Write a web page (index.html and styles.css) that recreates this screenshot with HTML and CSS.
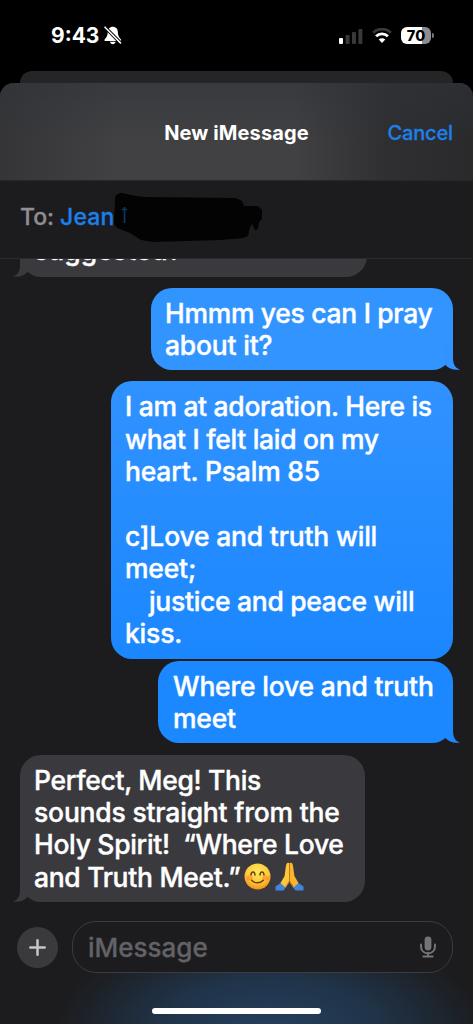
FILE: index.html
```html
<!DOCTYPE html>
<html lang="en">
<head>
<meta charset="utf-8">
<title>New iMessage</title>
<link rel="stylesheet" href="styles.css">
</head>
<body>
<div class="phone">
  <header class="status">
    <span class="time">9:43</span>
    <svg class="bell" width="18" height="19" viewBox="0 0 18 19"><path d="M8.8 .8C5.600 .8 3.900 3 3.700 6.500 3.500 10 2.700 11 .8 13.200c-.7.8-.4 1.800.7 1.800h14.600c1.100 0 1.400-1 .7-1.800-2-2.200-2.700-3.200-2.900-6.700C13.700 3 12 .8 8.800 .8ZM6 15.800h5.600c-.2 3.200-5.400 3.200-5.600 0Z" fill="#fff"/><path d="M.2 .4 17.300 17.800" stroke="#000" stroke-width="3.400"/><path d="M.5 .7 16.900 17.400" stroke="#fff" stroke-width="1.500"/></svg>
    <svg class="signal" width="24" height="16" viewBox="0 0 24 16"><rect x="0" y="10" width="4" height="6" rx="1" fill="#fff"/><g fill="#39393b"><rect x="6.600" y="7" width="4" height="9" rx="1"/><rect x="13" y="4" width="4" height="12" rx="1"/><rect x="19.400" y="1" width="4" height="15" rx="1"/></g></svg>
    <svg class="wifi" width="20" height="15" viewBox="0 0 20 15"><path d="M1.200 4.800C6-.1 14-.1 18.800 4.800" fill="none" stroke="#39393b" stroke-width="2.800"/><path d="M4.100 8.300c3.300-3.300 8.500-3.300 11.800 0" fill="none" stroke="#fff" stroke-width="2.900"/><path d="M6.700 11.500c1.900-1.800 4.700-1.800 6.600 0L10 14.900Z" fill="#fff"/></svg>
    <span class="battery">70</span><i class="battery-cap"></i>
  </header>
  <div class="back-sheet"></div>
  <main class="sheet">
    <div class="titlebar"><h1>New iMessage</h1><span class="cancel">Cancel</span></div>
    <div class="to-row">
      <span class="to">To:</span><span class="name">Jean</span>
      <svg class="scribble" width="152" height="54" viewBox="0 0 152 54"><path d="M3 8C3 3 5 1 10 1l14 3 8 1 92 1 6 3 2 5h14l4 4v9l-3 3-1 7-3 1-3-6-2 3-2 9-5 2-22 2-34 1-34 1-12-2L18 41 5 36 2 32Z" fill="#030304"/><path d="M12.500 15v16M9.800 17.500h5.400" stroke="#0b3765" stroke-width="1.700" fill="none"/></svg>
    </div>
    <section class="thread">
      <div class="bubble in clipped"><p>suggested?</p><svg class="tail" width="16" height="26" viewBox="0 0 16 26"><path d="M7 0v13.500C7 20 5 24 0 25.500c6 1.100 11.500-.9 14.500-4.500L16 0Z"/></svg></div>
      <div class="bubble out first"><p class="tight">Hmmm yes can I pray</p><p class="snug">about it?</p><svg class="tail" width="16" height="26" viewBox="0 0 16 26"><path d="M9 0v13.500c0 6.500 2 10.500 7 12-6 1.100-11.500-.9-14.500-4.500L0 0Z"/></svg></div>
      <div class="bubble out second"><p class="tight">I am at adoration. Here is</p><p class="tight">what I felt laid on my</p><p class="snug">heart. Psalm 85</p><p></p><p class="snug">c]Love and truth will</p><p class="snug">meet;</p><p class="indent tight">justice and peace will</p><p class="snug">kiss.</p></div>
      <div class="bubble out third"><p class="snug">Where love and truth</p><p class="snug">meet</p><svg class="tail" width="16" height="26" viewBox="0 0 16 26"><path d="M9 0v13.500c0 6.500 2 10.500 7 12-6 1.100-11.500-.9-14.500-4.500L0 0Z"/></svg></div>
      <div class="bubble in last"><p class="tight">Perfect, Meg! This</p><p class="snug">sounds straight from the</p><p class="tight">Holy Spirit!&nbsp; “Where Love</p>
        <p class="emoji-line"><span class="tight">and Truth Meet.”</span><svg class="smile" width="27" height="27" viewBox="0 0 27 27"><defs><radialGradient id="face" cx=".5" cy=".3" r=".72"><stop stop-color="#ffe85c"/><stop offset=".6" stop-color="#ffc936"/><stop offset="1" stop-color="#f58a18"/></radialGradient></defs><circle cx="13.500" cy="13.500" r="13" fill="url(#face)"/><g fill="#ff7930" opacity=".5"><ellipse cx="5.300" cy="15" rx="3.500" ry="2.500"/><ellipse cx="21.700" cy="15" rx="3.500" ry="2.500"/></g><path d="M7 12c.3-4.100 3.700-4.100 4 0M16 12c.3-4.100 3.700-4.100 4 0M7.700 17.200c3 3.500 8.600 3.500 11.600 0" fill="none" stroke="#69400f" stroke-width="1.500" stroke-linecap="round"/></svg><svg class="pray" width="29" height="29" viewBox="0 0 29 29"><path d="M.5 24.500 7 20l5 4-3.500 4.500H.5ZM28.500 24.500 22 20l-5 4 3.500 4.500h8Z" fill="#4385d8"/><path d="M14.200 1C12 0 11 2 10.800 5L9.600 14 5.500 21l5 4.500 3.700-5Z" fill="#ffc73d"/><path d="M14.800 1c2.200-1 3.200 1 3.400 4l1.200 9 4.100 7-5 4.500-3.700-5Z" fill="#fbb42c"/><path d="M14.500 1v18l-3.800 6M14.500 19l3.800 6" fill="none" stroke="#bd7413" stroke-width="1"/></svg></p>
        <svg class="tail" width="16" height="26" viewBox="0 0 16 26"><path d="M7 0v13.500C7 20 5 24 0 25.500c6 1.100 11.500-.9 14.500-4.500L16 0Z"/></svg></div>
    </section>
    <footer class="composer">
      <div class="plus"><svg width="17" height="17" viewBox="0 0 17 17"><path d="M8.500 1.300v14.400M1.300 8.500h14.400" stroke="#c6c6ca" stroke-width="2.500" stroke-linecap="round"/></svg></div>
      <div class="field"><span>iMessage</span><svg width="16" height="22" viewBox="0 0 16 22"><rect x="4.600" y=".5" width="6.800" height="14" rx="3.400" fill="#737378"/><path d="M1 8.500v2c0 9 14 9 14 0v-2M8 17v3.500M3.300 20.600h9.400" fill="none" stroke="#737378" stroke-width="2" stroke-linecap="round"/></svg></div>
    </footer>
    <div class="home"></div>
  </main>
</div>
</body>
</html>
```
FILE: styles.css
```css
* { box-sizing: border-box; margin: 0; padding: 0; }
body { background: #000; font-family: Inter, "Liberation Sans", sans-serif; }
.phone { width: 473px; height: 1024px; overflow: hidden; background: #000; display: flex; flex-direction: column; }
svg { display: block; flex: none; }
.status { height: 71px; flex: none; display: flex; align-items: center; padding-left: 51px; color: #fff; }
.time { width: 53px; font-size: 21px; font-weight: 700; white-space: nowrap; }
.signal { margin-left: 217px; }
.wifi { margin-left: 9px; }
.battery { width: 30px; height: 17px; margin-left: 9px; border-radius: 6px; background: linear-gradient(90deg, #fff 70%, #8d8d8f 70%); color: #000; font-size: 14.500px; font-weight: 800; line-height: 17px; text-align: center; }
.battery-cap { width: 2px; height: 5px; margin-left: 1px; border-radius: 0 2px 2px 0; background: #777; }
.back-sheet { height: 12px; flex: none; margin: 0 20px; border-radius: 12px 12px 0 0; background: #252527; }
.sheet { height: 941px; flex: none; display: flex; flex-direction: column; border-radius: 14px 14px 0 0; overflow: hidden; background: radial-gradient(ellipse 215px 110px at 57% 101%, #24405f 0%, #203449 50%, transparent 100%), #1c1c1e; }
.titlebar { height: 97px; flex: none; display: grid; grid-template-columns: 1fr auto 1fr; align-items: center; padding: 2px 20px 0; background: linear-gradient(180deg, rgba(45,51,57,.5), transparent 60%), linear-gradient(90deg, #353537 0, #414143 25%, #414143 62%, #2f2f31 82%, #2a2a2c 100%); }
h1 { grid-column: 2; color: #fff; font-size: 20px; font-weight: 700; line-height: 28px; letter-spacing: .12px; }
.cancel { justify-self: end; color: #1e7fe6; font-size: 20px; font-weight: 500; letter-spacing: -.15px; -webkit-text-stroke: .3px #1e7fe6; }
.to-row { height: 79px; flex: none; display: flex; align-items: center; padding: 0 0 6px 20px; border-top: 1px solid #29292b; border-bottom: 1px solid #2b2b2d; background: #1c1c1e; font-size: 23px; font-weight: 500; -webkit-text-stroke: .3px; }
.to { width: 40px; color: #8e8e94; }
.name { width: 52px; color: #1d7fe8; letter-spacing: .15px; }
.scribble { margin-top: 4px; }
.thread { height: 644px; flex: none; display: flex; flex-direction: column; overflow: hidden; }
.bubble { position: relative; flex: none; padding: 8.500px 14px; border-radius: 21px; color: #fff; font-size: 26.500px; font-weight: 500; line-height: 32.400px; -webkit-text-stroke: .4px #fff; }
.bubble p { height: 32.400px; white-space: nowrap; }
.snug { letter-spacing: -.2px; }
.tight { letter-spacing: -.31px; }
.in { align-self: flex-start; margin-left: 20px; background: #3a3a3e; fill: #3a3a3e; }
.out { align-self: flex-end; margin-right: 20px; fill: #3093ff; }
.tail { position: absolute; bottom: 0; }
.in .tail { left: -7px; }
.out .tail { right: -7px; }
.clipped { width: 347px; height: 50px; margin-top: -32px; padding-top: 6.500px; }
.first { width: 302px; height: 82px; margin-top: 11px; background: #3294ff; }
.second { width: 342px; height: 278px; margin-top: 11px; padding-top: 9.200px; background: linear-gradient(#3092ff, #1b87ff); }
.third { width: 295px; height: 82px; margin-top: 2px; padding-left: 15px; background: #1b88ff; fill: #1b88ff; }
.last { width: 345px; height: 147px; margin-top: 12px; }
.bubble .indent { padding-left: 24px; }
.emoji-line { display: flex; align-items: center; }
.smile { margin-left: 3px; }
.pray { margin-left: 4px; }
.composer { height: 88px; flex: none; display: flex; align-items: center; gap: 14px; padding-left: 17px; }
.plus { width: 41px; height: 41px; border-radius: 50%; background: #3a3a3d; display: grid; place-items: center; }
.field { width: 381px; height: 52px; display: flex; align-items: center; justify-content: space-between; padding: 0 16px 0 15px; border: 1px solid #3b3b40; border-radius: 24px; background: #1c1c1f; color: #626267; font-size: 26px; font-weight: 500; -webkit-text-stroke: .3px #626267; }
.home { width: 169px; height: 6px; flex: none; margin: 17px auto 0; border-radius: 3px; background: #fff; }
```
